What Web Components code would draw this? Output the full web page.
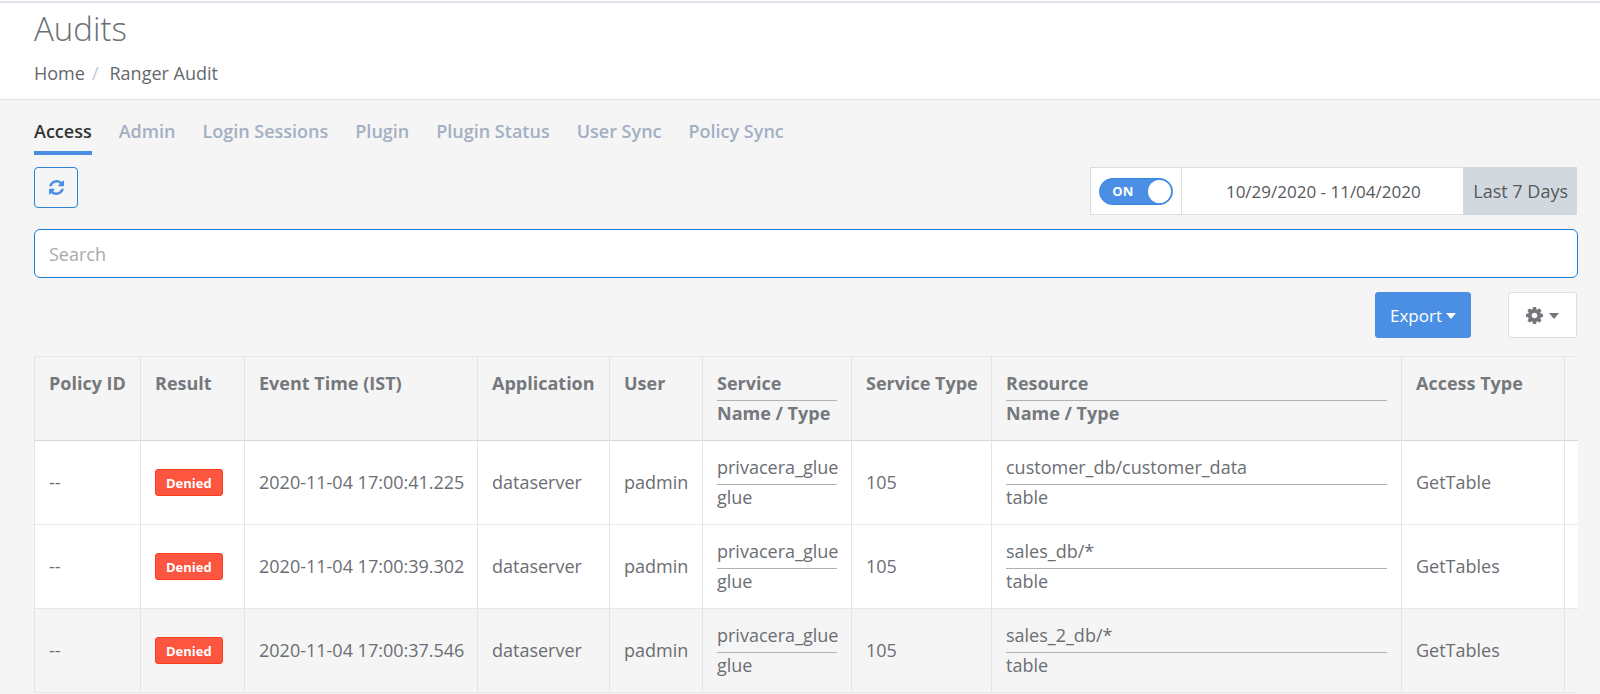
<!DOCTYPE html>
<html lang="en">
<head>
<meta charset="utf-8">
<title>Audits</title>
<style>
  body {
    margin: 0;
    background: #f5f5f5;
    color: #6b6e73;
    font: 18px/25px "Open Sans", sans-serif;
  }
</style>
</head>
<body>
<audit-page></audit-page>
<script>
function define(name, html, init) {
  const template = document.createElement('template');
  template.innerHTML = html;
  customElements.define(name, class extends HTMLElement {
    constructor() {
      super();
      this.attachShadow({ mode: 'open' }).append(template.content.cloneNode(true));
    }
    connectedCallback() {
      if (init && !this.ready) { this.ready = true; init(this, this.shadowRoot); }
    }
  });
}

define('page-header', `
  <style>
    :host { display: block; background: #fff; border-bottom: 1px solid #e2e3e4; padding: 1px 34px 13px; }
    :host::before { content: ""; display: block; height: 2px; margin: 0 -34px; background: #e1e3ea; }
    h1 { margin: 4px 0 10px; font-size: 33px; line-height: 44px; font-weight: 300; }
    ol { display: flex; margin: 0; padding: 0; list-style: none; }
    li + li::before { content: "/"; color: #c4c6c8; padding: 0 11px 0 7px; }
    a { color: #65686d; text-decoration: none; }
  </style>
  <h1><slot></slot></h1>
  <nav aria-label="Breadcrumb"><ol><li><a href="#home">Home</a></li><li><a href="#ranger">Ranger Audit</a></li></ol></nav>
`);

define('audit-tabs', `
  <style>
    :host { display: block; }
    nav { display: flex; gap: 27px; }
    a { padding-bottom: 7px; border-bottom: 4px solid transparent; color: #a3afc2; font-weight: 600; text-decoration: none; }
    a[aria-current] { color: #333; border-color: #4a8fe4; }
  </style>
  <nav aria-label="Audit sections"></nav>
`, (host, root) => {
  const nav = root.querySelector('nav');
  host.getAttribute('items').split(',').forEach((label, i) => {
    const a = document.createElement('a');
    a.href = '#' + label.toLowerCase().replace(/ /g, '-');
    a.textContent = label;
    if (i === 0) a.setAttribute('aria-current', 'page');
    nav.append(a);
  });
});

define('ui-button', `
  <style>
    :host { display: block; }
    button {
      display: flex; align-items: center; justify-content: center; gap: 6px;
      box-sizing: border-box; height: 46px; padding: 0 17px; margin: 0;
      font: inherit; font-size: 17px; color: #73767b; background: #fff;
      border: 1px solid #dcdddf; border-radius: 3px;
    }
    :host([kind=primary]) button { gap: 4px; padding: 0 14px; color: #fff; background: #4a8fe4; border-color: #4a8fe4; font-weight: 500; }
    :host([kind=outline]) button { width: 44px; height: 41px; padding: 0; color: #4a8fe4; background: transparent; border-color: #2b82dc; border-radius: 4px; }
    .caret { display: none; border: 5px solid transparent; border-top: 6px solid; border-top-color: currentColor; border-bottom: 0; margin-top: 2px; }
    :host([menu]) .caret { display: block; }
  </style>
  <button type="button"><slot></slot><span class="caret"></span></button>
`, (host, root) => {
  if (host.title) root.querySelector('button').setAttribute('aria-label', host.title);
});

define('toggle-switch', `
  <style>
    :host { display: block; }
    label { position: relative; display: flex; align-items: center; box-sizing: border-box; width: 74px; height: 27px; padding-left: 12px; border-radius: 14px; background: #4a8fe4; border: 1px solid #3584e0; color: #fff; font-size: 13px; font-weight: 700; }
    input { position: absolute; inset: 0; width: 100%; height: 100%; margin: 0; opacity: 0; }
    i { position: absolute; right: 1px; top: 1px; width: 23px; height: 23px; border-radius: 50%; background: #fff; }
  </style>
  <label><input type="checkbox" role="switch" checked><span>ON</span><i></i></label>
`);

define('date-filter', `
  <style>
    :host { display: flex; box-sizing: border-box; height: 48px; background: #fff; border: 1px solid #dcdddf; }
    .switch { display: flex; align-items: center; padding: 0 8px; border-right: 1px solid #dcdddf; }
    input { box-sizing: border-box; width: 282px; border: 0; padding: 0; background: #fff; color: #55585c; font: inherit; font-size: 17px; text-align: center; }
    button { border: 0; margin: -1px; padding: 0 9px 0 10px; background: #d1d9df; color: #55585c; font: inherit; }
  </style>
  <div class="switch"><toggle-switch></toggle-switch></div>
  <input type="text" aria-label="Date range" value="10/29/2020 - 11/04/2020">
  <button type="button">Last 7 Days</button>
`);

define('search-box', `
  <style>
    :host { display: block; }
    input { display: block; box-sizing: border-box; width: 100%; height: 49px; padding: 0 14px; border: 1px solid #1c7cd6; border-radius: 6px; background: #fff; color: #55585c; font: inherit; outline: 0; }
    input::placeholder { color: #a9a9a9; opacity: 1; }
  </style>
  <input type="text" placeholder="Search" aria-label="Search">
`);

define('status-badge', `
  <style>
    :host { display: inline-block; box-sizing: border-box; height: 27px; padding: 0 10px; border: 1px solid #fb3d1c; border-radius: 3px; background: #fc5540; color: #fff; font-size: 13px; line-height: 26px; font-weight: 700; vertical-align: middle; }
  </style>
  <slot></slot>
`);

define('stacked-text', `
  <style>
    :host { display: block; }
    .top { padding-bottom: 4px; border-bottom: 1px solid #b0b2b4; }
  </style>
  <div class="top"><slot></slot></div>
  <div><slot name="below"></slot></div>
`);

define('audit-table', `
  <style>
    :host { display: block; overflow: hidden; }
    table { width: 100%; table-layout: fixed; border-collapse: separate; border-spacing: 0; border-top: 1px solid #e7e8e8; border-left: 1px solid #e3e4e4; }
    th, td { box-sizing: border-box; height: 84px; padding: 14px; text-align: left; white-space: nowrap; border-right: 1px solid #e3e4e4; border-bottom: 1px solid #e6e7e7; }
    th { vertical-align: top; font-weight: 700; color: #75787c; border-bottom-color: #d5d7d8; }
    td { vertical-align: middle; background: #fff; }
    tr.hover td { background: #f5f5f5; }
    th:last-child, td:last-child { padding: 0; border-right: 0; }
    .id { width: 106px; } .result { width: 104px; } .time { width: 233px; }
    .app { width: 132px; } .user { width: 93px; } .service { width: 149px; }
    .kind { width: 140px; } .access { width: 163px; } .more { width: 13px; }
  </style>
  <table>
    <colgroup><col class="id"><col class="result"><col class="time"><col class="app"><col class="user"><col class="service"><col class="kind"><col><col class="access"><col class="more"></colgroup>
    <thead><tr>
      <th>Policy ID</th><th>Result</th><th>Event Time (IST)</th><th>Application</th><th>User</th>
      <th><stacked-text>Service<span slot="below">Name / Type</span></stacked-text></th>
      <th>Service Type</th>
      <th><stacked-text>Resource<span slot="below">Name / Type</span></stacked-text></th>
      <th>Access Type</th><th></th>
    </tr></thead>
    <tbody></tbody>
  </table>
`, (host, root) => {
  const rows = [
    ['17:00:41.225', 'customer_db/customer_data', 'GetTable'],
    ['17:00:39.302', 'sales_db/*', 'GetTables'],
    ['17:00:37.546', 'sales_2_db/*', 'GetTables']
  ];
  root.querySelector('tbody').innerHTML = rows.map(([time, resource, access], i) => `
    <tr${i === 2 ? ' class="hover"' : ''}>
      <td>--</td><td><status-badge>Denied</status-badge></td><td>2020-11-04 ${time}</td>
      <td>dataserver</td><td>padmin</td>
      <td><stacked-text>privacera_glue<span slot="below">glue</span></stacked-text></td>
      <td>105</td>
      <td><stacked-text>${resource}<span slot="below">table</span></stacked-text></td>
      <td>${access}</td><td></td>
    </tr>`).join('');
});

define('audit-page', `
  <style>
    :host { display: block; }
    main { display: flex; flex-direction: column; padding: 19px 22px 0 34px; }
    .tools { display: flex; justify-content: space-between; align-items: flex-start; margin: 12px 1px 14px 0; }
    .actions { display: flex; justify-content: flex-end; gap: 37px; margin: 14px 1px 18px 0; }
    svg { display: block; fill: currentColor; }
  </style>
  <page-header>Audits</page-header>
  <main>
    <audit-tabs items="Access,Admin,Login Sessions,Plugin,Plugin Status,User Sync,Policy Sync"></audit-tabs>
    <div class="tools">
      <ui-button kind="outline" title="Refresh">
        <svg width="15" height="15" viewBox="0 0 1536 1536"><path d="M1511 928q0 5-1 7-64 268-268 434.500T764 1536q-146 0-282.500-55T238 1324l-129 129q-19 19-45 19t-45-19-19-45V960q0-26 19-45t45-19h448q26 0 45 19t19 45-19 45l-137 137q71 66 161 102t187 36q134 0 250-65t186-179q11-17 53-117 8-23 30-23h192q13 0 22.500 9.500t9.500 22.500zm25-800v448q0 26-19 45t-45 19h-448q-26 0-45-19t-19-45 19-45l138-138Q969 256 768 256q-134 0-250 65T332 500q-11 17-53 117-8 23-30 23H50q-13 0-22.500-9.500T18 608v-7q65-268 270-434.500T768 0q146 0 284 55.500T1297 212l130-129q19-19 45-19t45 19 19 45z"/></svg>
      </ui-button>
      <date-filter></date-filter>
    </div>
    <search-box></search-box>
    <div class="actions">
      <ui-button kind="primary" menu>Export</ui-button>
      <ui-button menu title="Table settings">
        <svg width="17" height="17" viewBox="0 0 1536 1536"><path d="M1024 768q0-106-75-181t-181-75-181 75-75 181 75 181 181 75 181-75 75-181zm512-109v222q0 12-8 23t-20 13l-185 28q-19 54-39 91 35 50 107 138 10 12 10 25t-9 23q-27 37-99 108t-94 71q-12 0-26-9l-138-108q-44 23-91 38-16 136-29 186-7 28-36 28H657q-14 0-24.500-8.500T621 1506l-28-184q-49-16-90-37l-141 107q-10 9-25 9-14 0-25-11-126-114-165-168-7-10-7-23 0-12 8-23 15-21 51-66.500t54-70.500q-27-50-41-99L29 913q-13-2-21-12.500T0 877V655q0-12 8-23t19-13l186-28q14-46 39-92-40-57-107-138-10-12-10-24 0-10 9-23 26-36 98.500-107.500T337 135q13 0 26 10l138 107q44-23 91-38 16-136 29-186 7-28 36-28h222q14 0 24.500 8.500T915 30l28 184q49 16 90 37l142-107q9-9 24-9 13 0 25 10 129 119 165 170 7 8 7 22 0 12-8 23-15 21-51 66.500t-54 70.500q26 50 41 98l183 28q13 2 21 12.500t8 23.500z"/></svg>
      </ui-button>
    </div>
    <audit-table></audit-table>
  </main>
`);
</script>
</body>
</html>
